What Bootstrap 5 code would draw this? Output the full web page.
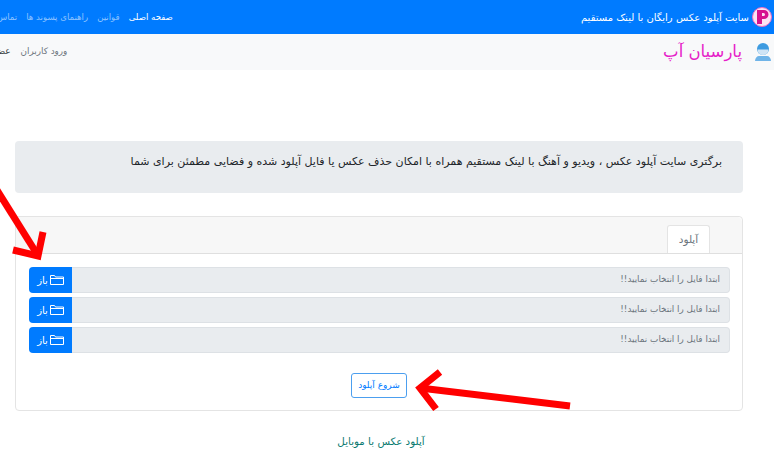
<!DOCTYPE html>
<html lang="fa" dir="rtl">
<head>
<meta charset="utf-8">
<title>پارسیان آپ</title>
<link rel="stylesheet" href="https://cdn.jsdelivr.net/npm/bootstrap@5.3.0/dist/css/bootstrap.min.css">
<style>
html,body{height:457px;overflow:hidden;}
body{font-family:"DejaVu Sans",sans-serif;background:#fff;position:relative;}
.top-strip{height:34px;background:#007bff;flex-wrap:nowrap;overflow:hidden;padding-right:2px;}
.brand-logo{width:20px;height:20px;flex:none;}
.brand-text{color:#fff;font-size:10px;white-space:nowrap;margin-right:3px;}
.top-links{margin-right:auto;margin-left:-21px;gap:9px;flex-wrap:nowrap;}
.top-links a{color:rgba(255,255,255,.55);font-size:8.6px;text-decoration:none;white-space:nowrap;}
.top-links a.on{color:#fff;}
.sub-strip{height:36px;background:#f8f9fa;overflow:hidden;padding-right:3px;}
.user-icon{flex:none;}
.site-name{color:#e61ec8;font-size:16.5px;margin-right:13px;white-space:nowrap;}
.sub-links{margin-right:auto;margin-left:-18px;gap:10px;}
.sub-links a{color:#6c757d;font-size:8.8px;text-decoration:none;white-space:nowrap;}
.sub-links a.dark{color:#343a40;}
.page-wrap{width:728px;margin-right:31px;padding-top:71px;}
.hero-box{height:52px;background:#e9ecef;border-radius:4px;color:#212529;font-size:11px;padding:13px 21px 0 0;white-space:nowrap;margin-bottom:23px;}
.upload-card{height:195px;border-radius:4px;border-color:#e4e4e4;}
.upload-card .card-header{height:37px;padding:8px 0 0 0;background:#f7f7f7;border-bottom:1px solid #dfdfdf;}
.tab-pill{width:43px;height:28px;background:#fff;border:1px solid #e4e4e4;border-bottom:0;border-radius:3px 3px 0 0;color:#6c757d;font-size:10.5px;margin-right:32px;}
.upload-card .card-body{padding:13px 12px 0 13px;}
.pick-row{height:26px;margin-bottom:4px;flex-wrap:nowrap;}
.pick-field{flex:1;background:#e9ecef;border:1px solid #dde1e5;border-left:0;border-radius:0 4px 4px 0;color:#6c757d;font-size:8.8px;padding:0 9px;}
.pick-btn{width:43px;background:#007bff;color:#fff;border-radius:4px 0 0 4px;font-size:10px;gap:2px;}
.start-btn{display:block;width:56px;height:25px;margin:20px 323px 0 0;padding:0;font-size:9px;color:#007bff;border:1px solid #4c9fef;border-radius:3px;background:#fff;}
.mobile-link{display:block;text-align:center;color:#0a7a70;font-size:10.3px;margin-top:23px;padding-left:4px;text-decoration:none;}
.red-arrows{position:absolute;left:0;top:0;width:774px;height:457px;pointer-events:none;}
</style>
</head>
<body>
<div class="top-strip d-flex align-items-center">
  <svg class="brand-logo" viewBox="0 0 20 20"><circle cx="10" cy="10" r="9.5" fill="#fbe3f3" stroke="#f06cc0"/><path d="M5 3h7a4.300 4.300 0 0 1 0 9H10v5H5z M10 6v3h1.500a1.500 1.500 0 0 0 0-3z" fill="#d6128e" fill-rule="evenodd"/></svg>
  <span class="brand-text">سایت آپلود عکس رایگان با لینک مستقیم</span>
  <div class="top-links d-flex">
    <a class="on" href="#">صفحه اصلی</a><a href="#">قوانین</a><a href="#">راهنمای پسوند ها</a><a href="#">تماس با ما</a>
  </div>
</div>
<div class="sub-strip d-flex align-items-center">
  <svg class="user-icon" width="16" height="18" viewBox="0 0 16 18"><circle cx="8" cy="6" r="6" fill="#3d9be0"/><path d="M2.500 6.500h11a5.500 5.500 0 0 1-11 0z" fill="#cfe4f5"/><path d="M0 18c0-3 2-5 4-5h8c2 0 4 2 4 5z" fill="#6fb4e8"/></svg>
  <span class="site-name">پارسیان آپ</span>
  <div class="sub-links d-flex">
    <a href="#">ورود کاربران</a><a class="dark" href="#">عضویت</a>
  </div>
</div>
<div class="page-wrap">
  <div class="hero-box">برگتری سایت آپلود عکس ، ویدیو و آهنگ با لینک مستقیم همراه با امکان حذف عکس یا فایل آپلود شده و فضایی مطمئن برای شما</div>
  <div class="card upload-card">
    <div class="card-header d-flex">
      <div class="tab-pill d-flex align-items-center justify-content-center">آپلود</div>
    </div>
    <div class="card-body">
      <div class="pick-row d-flex">
        <div class="pick-field d-flex align-items-center">ابتدا فایل را انتخاب نمایید!!</div>
        <div class="pick-btn d-flex align-items-center justify-content-center"><svg width="14" height="10" viewBox="0 0 14 10" fill="none" stroke="#fff"><path d="M.5 9.500v-9h4l1 1.500h8v7.500z"/><path d="M.5 3.500h13"/></svg><span>باز</span></div>
      </div>
      <div class="pick-row d-flex">
        <div class="pick-field d-flex align-items-center">ابتدا فایل را انتخاب نمایید!!</div>
        <div class="pick-btn d-flex align-items-center justify-content-center"><svg width="14" height="10" viewBox="0 0 14 10" fill="none" stroke="#fff"><path d="M.5 9.500v-9h4l1 1.500h8v7.500z"/><path d="M.5 3.500h13"/></svg><span>باز</span></div>
      </div>
      <div class="pick-row d-flex">
        <div class="pick-field d-flex align-items-center">ابتدا فایل را انتخاب نمایید!!</div>
        <div class="pick-btn d-flex align-items-center justify-content-center"><svg width="14" height="10" viewBox="0 0 14 10" fill="none" stroke="#fff"><path d="M.5 9.500v-9h4l1 1.500h8v7.500z"/><path d="M.5 3.500h13"/></svg><span>باز</span></div>
      </div>
      <button class="start-btn" type="button">شروع آپلود</button>
    </div>
  </div>
  <a class="mobile-link" href="#">آپلود عکس با موبایل</a>
</div>
<svg class="red-arrows" viewBox="0 0 774 457" fill="none" stroke="#f00" stroke-width="7" stroke-linejoin="miter">
  <path d="M-3 190L37 254"/><path d="M43 232L38 256L13 250"/>
  <path d="M570 406L420 388"/><path d="M440 372L420 388L436 409"/>
</svg>
</body>
</html>
